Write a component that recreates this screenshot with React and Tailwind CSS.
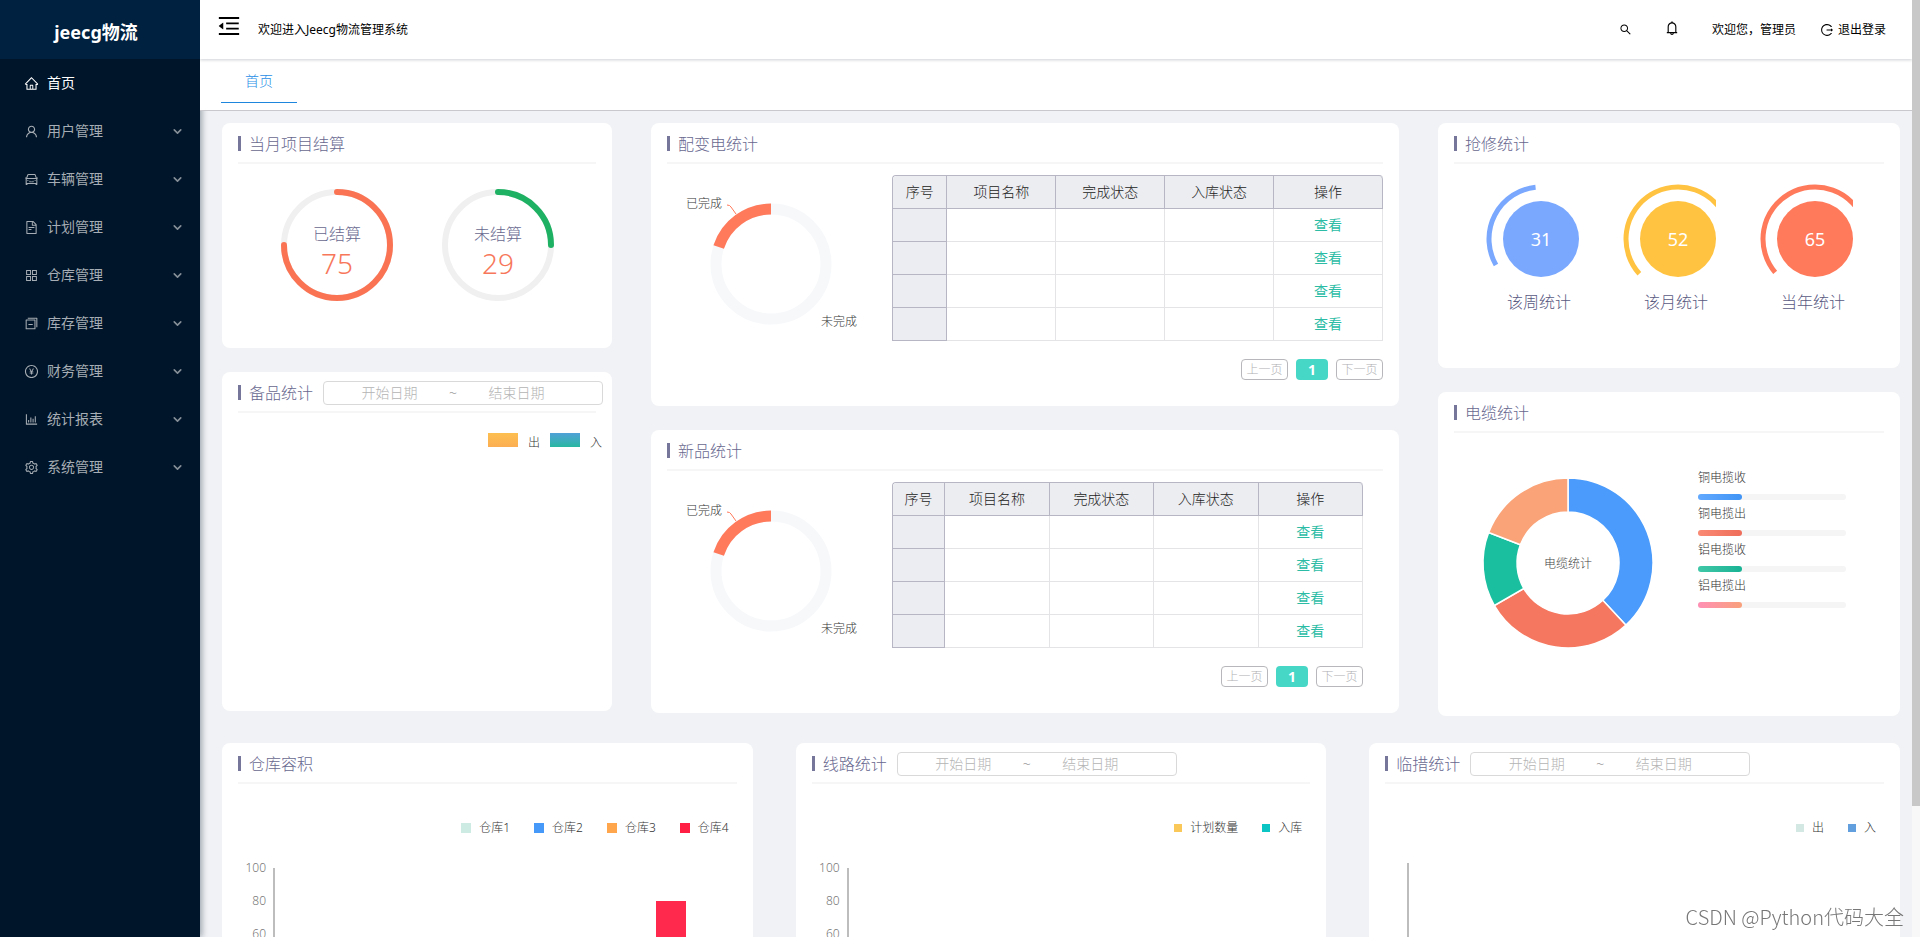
import React from "react";
import {
  AiOutlineHome,
  AiOutlineUser,
  AiOutlineCar,
  AiOutlineFileText,
  AiOutlineAppstore,
  AiOutlineSwitcher,
  AiOutlinePayCircle,
  AiOutlineBarChart,
  AiOutlineSetting,
  AiOutlineMenuFold,
  AiOutlineSearch,
  AiOutlineBell,
  AiOutlineLogout,
} from "react-icons/ai";
import { ChevronDown } from "lucide-react";

const MENU = [
  { label: "首页", icon: AiOutlineHome, active: true },
  { label: "用户管理", icon: AiOutlineUser },
  { label: "车辆管理", icon: AiOutlineCar },
  { label: "计划管理", icon: AiOutlineFileText },
  { label: "仓库管理", icon: AiOutlineAppstore },
  { label: "库存管理", icon: AiOutlineSwitcher },
  { label: "财务管理", icon: AiOutlinePayCircle },
  { label: "统计报表", icon: AiOutlineBarChart },
  { label: "系统管理", icon: AiOutlineSetting },
];

const COLUMNS = ["序号", "项目名称", "完成状态", "入库状态", "操作"];

const CABLE_SLICES = [
  { from: 0, to: 137, color: "#4a9bfb" },
  { from: 137, to: 240, color: "#f5775f" },
  { from: 240, to: 291, color: "#1abfa0" },
  { from: 291, to: 360, color: "#faa378" },
];

const CABLE_BARS = [
  { label: "铜电揽收", value: 30, fill: "bg-linear-to-r from-[#62a9ff] to-[#3f94f5]" },
  { label: "铜电揽出", value: 30, fill: "bg-linear-to-r from-[#fa8a74] to-[#ee6d5a]" },
  { label: "铝电揽收", value: 30, fill: "bg-linear-to-r from-[#3fc8a8] to-[#16b294]" },
  { label: "铝电揽出", value: 30, fill: "bg-linear-to-r from-[#ff8fb4] to-[#f9a07a]" },
];

const REPAIRS = [
  { label: "该周统计", value: 31, color: "#7aa8ff", from: 240, to: 354 },
  { label: "该月统计", value: 52, color: "#ffc341", from: 228, to: 430 },
  { label: "当年统计", value: 65, color: "#ff795b", from: 230, to: 430 },
];

// angles are in degrees, clockwise from twelve o'clock
const point = (cx, cy, r, deg) => {
  const rad = ((deg - 90) * Math.PI) / 180;
  return `${cx + r * Math.cos(rad)} ${cy + r * Math.sin(rad)}`;
};

const arc = (cx, cy, r, from, to) =>
  `M ${point(cx, cy, r, from)} A ${r} ${r} 0 ${to - from > 180 ? 1 : 0} 1 ${point(cx, cy, r, to)}`;

const slice = (cx, cy, inner, outer, from, to) =>
  `${arc(cx, cy, outer, from, to)} L ${point(cx, cy, inner, to)} A ${inner} ${inner} 0 ${
    to - from > 180 ? 1 : 0
  } 0 ${point(cx, cy, inner, from)} Z`;

const Sidebar = () => (
  <aside className="relative z-10 flex w-[200px] shrink-0 flex-col bg-[#001529] shadow-[2px_0_6px_rgba(0,21,41,0.35)]">
    <div className="flex h-[59px] items-center justify-center bg-[#002140] pt-1 pr-2">
      <h1 className="text-lg font-bold text-white">jeecg物流</h1>
    </div>
    <nav>
      {MENU.map(({ label, icon: Icon, active }) => (
        <a
          key={label}
          href="#"
          className={`flex h-12 items-center gap-2 pr-4 pl-6 text-sm ${
            active ? "text-white" : "text-[#a6adb4]"
          }`}
        >
          <Icon size={15} />
          <span className="flex-1">{label}</span>
          {!active && <ChevronDown size={13} strokeWidth={3} className="opacity-80" />}
        </a>
      ))}
    </nav>
  </aside>
);

const Header = () => (
  <header className="relative z-20 flex h-[59px] items-center bg-white pr-[26px] pl-4 text-xs text-black shadow-[0_1px_3px_rgba(0,21,41,0.2)]">
    <button type="button" aria-label="menu" className="mb-2">
      <AiOutlineMenuFold size={26} />
    </button>
    <span className="ml-4 flex-1">欢迎进入Jeecg物流管理系统</span>
    <button type="button" aria-label="search" className="mr-8">
      <AiOutlineSearch size={13} />
    </button>
    <button type="button" aria-label="notice" className="mr-8 mb-1">
      <AiOutlineBell size={16} />
    </button>
    <span className="mr-6">欢迎您，管理员</span>
    <a href="#" className="flex items-center gap-1">
      <AiOutlineLogout size={14} />
      退出登录
    </a>
  </header>
);

const Tabs = () => (
  <div className="relative z-10 h-[52px] border-b border-[#c9c9cd] bg-white px-[21px]">
    <button
      type="button"
      className="h-11 border-b border-[#1f86dd] px-6 text-sm font-light text-[#2a8fe6]"
    >
      首页
    </button>
  </div>
);

const Card = ({ title, extra, className = "", children }) => (
  <section className={`rounded-lg bg-white px-4 ${className}`}>
    <div className="flex h-[41px] items-center border-b-2 border-[#f6f6f6] pt-0.5">
      <span className="mr-2 h-[15px] w-[3px] shrink-0 bg-[#76769a]" />
      <h2 className="shrink-0 text-base font-light text-[#68688f]">{title}</h2>
      {extra}
    </div>
    {children}
  </section>
);

const DateRange = () => (
  <div className="ml-2.5 flex h-6 w-[280px] shrink-0 items-center rounded-sm border border-[#d9d9d9] bg-white pr-8 pl-3 text-sm text-[#8c8c8c]">
    <input
      aria-label="开始日期"
      placeholder="开始日期"
      className="w-0 flex-1 text-center outline-none placeholder:text-[#b4b4b4]"
    />
    <span className="w-5 text-center">~</span>
    <input
      aria-label="结束日期"
      placeholder="结束日期"
      className="w-0 flex-1 text-center outline-none placeholder:text-[#b4b4b4]"
    />
  </div>
);

const ProgressRing = ({ label, value, percent, color }) => (
  <svg width="112" height="112" viewBox="0 0 112 112">
    <circle cx="56" cy="56" r="53" fill="none" stroke="#f0f0f0" strokeWidth="6" />
    <path
      d={arc(56, 56, 53, 0, percent * 3.6)}
      fill="none"
      stroke={color}
      strokeWidth="6"
      strokeLinecap="round"
    />
    <text x="56" y="51" textAnchor="middle" fontSize="16" fill="#68688f">
      {label}
    </text>
    <text x="56" y="85" textAnchor="middle" fontSize="28" fill="#f7775b">
      {value}
    </text>
  </svg>
);

const FinishDonut = () => (
  <svg width="225" height="180" viewBox="0 0 225 180" className="shrink-0">
    <circle cx="104" cy="100" r="55" fill="none" stroke="#f6f8fa" strokeWidth="11" />
    <path d={arc(104, 100, 55, 288, 360)} fill="none" stroke="#ff795b" strokeWidth="11" />
    <path d="M60 41 Q63 41 64 43 L69 50" fill="none" stroke="#ff795b" />
    <text x="19" y="44" fontSize="12" fill="#333">
      已完成
    </text>
    <text x="154" y="162" fontSize="12" fill="#333">
      未完成
    </text>
  </svg>
);

const ProjectTable = () => (
  <div className="rounded-t border-t border-l border-[#b6b6c4]">
    <table className="w-full table-fixed border-separate border-spacing-0 text-sm">
      <colgroup>
        <col className="w-1/9" />
        <col className="w-2/9" />
        <col className="w-2/9" />
        <col className="w-2/9" />
        <col className="w-2/9" />
      </colgroup>
      <thead>
        <tr className="h-[33px] text-[#222]">
          {COLUMNS.map((name) => (
            <th
              key={name}
              className="border-r border-b border-[#b6b6c4] bg-[#ecedf1] p-0 font-light first:rounded-tl last:rounded-tr"
            >
              {name}
            </th>
          ))}
        </tr>
      </thead>
      <tbody>
        {[1, 2, 3, 4].map((row) => (
          <tr key={row} className="h-[33px]">
            <td className="border-r border-b border-[#b6b6c4] bg-[#ecedf2] p-0" />
            <td className="border-r border-b border-[#e4e4e6] p-0" />
            <td className="border-r border-b border-[#e4e4e6] p-0" />
            <td className="border-r border-b border-[#e4e4e6] p-0" />
            <td className="border-r border-b border-[#e4e4e6] p-0 text-center">
              <a href="#" className="font-normal text-[#2cbca5]">
                查看
              </a>
            </td>
          </tr>
        ))}
      </tbody>
    </table>
  </div>
);

const Pager = () => (
  <div className="mt-[18px] flex justify-end gap-2 text-xs text-[#b0b0b4]">
    <button type="button" className="h-[21px] w-[47px] rounded border border-[#b8b8bc]">
      上一页
    </button>
    <button type="button" className="h-[21px] w-8 rounded bg-[#46d7c6] text-sm leading-4 font-bold text-white">
      1
    </button>
    <button type="button" className="h-[21px] w-[47px] rounded border border-[#b8b8bc]">
      下一页
    </button>
  </div>
);

const FinishCard = ({ title, tableClass = "" }) => (
  <Card title={title} className="pb-[26px]">
    <div className="flex">
      <FinishDonut />
      <div className={`min-w-0 flex-1 pt-[11px] ${tableClass}`}>
        <ProjectTable />
        <Pager />
      </div>
    </div>
  </Card>
);

const RepairDial = ({ label, value, color, from, to }) => (
  <div className="w-[93px]">
    <svg width="93" height="96" viewBox="0 0 93 96">
      <circle cx="55" cy="55" r="38" fill={color} />
      <path d={arc(55, 55, 52, from, to)} fill="none" stroke={color} strokeWidth="5" />
      <text x="55" y="62" textAnchor="middle" fontSize="18" fontWeight="400" fill="#fff">
        {value}
      </text>
    </svg>
    <p className="mt-2.5 pl-3.5 text-center text-base text-[#58587f]">{label}</p>
  </div>
);

const CableChart = () => (
  <div className="flex gap-11 pt-9">
    <svg width="200" height="200" viewBox="0 0 200 200" className="shrink-0">
      {CABLE_SLICES.map(({ from, to, color }) => (
        <path
          key={color}
          d={slice(114, 94, 51, 85, from, to)}
          fill={color}
          stroke="#fff"
          strokeWidth="1.5"
        />
      ))}
      <text x="114" y="99" textAnchor="middle" fontSize="12" fill="#444">
        电缆统计
      </text>
    </svg>
    <ul className="w-[148px] pt-px">
      {CABLE_BARS.map(({ label, value, fill }) => (
        <li key={label} className="mb-1.5 text-xs text-[#333]">
          <span className="mb-2 block">{label}</span>
          <div className="h-1.5 rounded-full bg-[#f5f5f5]">
            <div className={`h-1.5 rounded-full ${fill}`} style={{ width: `${value}%` }} />
          </div>
        </li>
      ))}
    </ul>
  </div>
);

const Legend = ({ items }) => (
  <ul className="mt-9 flex justify-end gap-6 pr-2 text-xs text-[#333]">
    {items.map(([label, mark]) => (
      <li key={label} className="flex items-center gap-2">
        <span className={mark} />
        {label}
      </li>
    ))}
  </ul>
);

const Axis = ({ children }) => (
  <div className="mt-6 flex pb-8">
    <ul className="w-7 text-right text-xs text-[#777]">
      {[100, 80, 60, 40, 20, 0].map((tick) => (
        <li key={tick} className="h-[33px]">
          {tick}
        </li>
      ))}
    </ul>
    <div className="mt-2 ml-[7px] flex h-[165px] flex-1 items-end justify-end border-b-2 border-l-2 border-[#bdbdbd] pr-[51px]">
      {children}
    </div>
  </div>
);

const App = () => (
  <div className="flex h-screen overflow-hidden bg-[#f0f2f5] font-['Noto_Sans','Noto_Sans_CJK_SC',sans-serif]">
    <Sidebar />
    <div className="min-w-0 flex-1 overflow-y-auto [scrollbar-width:none]">
      <Header />
      <Tabs />
      <main className="flex flex-col gap-[27px] pt-3 pr-3 pb-6 pl-[22px] font-light">
        <div className="grid grid-cols-[390fr_748fr_462fr] items-start gap-[39px]">
          <div className="flex flex-col gap-6">
            <Card title="当月项目结算">
              <div className="flex justify-center gap-[49px] pt-[25px] pb-[47px]">
                <ProgressRing label="已结算" value="75" percent={75} color="#fa7454" />
                <ProgressRing label="未结算" value="29" percent={25} color="#1fb163" />
              </div>
            </Card>
            <Card title="备品统计" extra={<DateRange />} className="min-h-[339px]">
              <ul className="mt-5 -mr-1.5 flex justify-end gap-2.5 text-xs text-[#333]">
                <li className="flex gap-2.5">
                  <span className="h-3.5 w-[30px] bg-linear-to-b from-[#fdbf50] to-[#fcae52]" />
                  <span className="pt-0.5">出</span>
                </li>
                <li className="flex gap-2.5">
                  <span className="h-3.5 w-[30px] bg-linear-to-b from-[#4fa1d8] to-[#27b7a0]" />
                  <span className="pt-0.5">入</span>
                </li>
              </ul>
            </Card>
          </div>

          <div className="flex flex-col gap-6">
            <FinishCard title="配变电统计" />
            <FinishCard title="新品统计" tableClass="pr-5" />
          </div>

          <div className="flex flex-col gap-6">
            <Card title="抢修统计">
              <div className="flex justify-center gap-11 pt-5 pb-[54px]">
                {REPAIRS.map((item) => (
                  <RepairDial key={item.label} {...item} />
                ))}
              </div>
            </Card>
            <Card title="电缆统计" className="pb-[47px]">
              <CableChart />
            </Card>
          </div>
        </div>

        <div className="grid grid-cols-3 gap-[43px]">
          <Card title="仓库容积">
            <Legend
              items={[
                ["仓库1", "size-2.5 bg-[#cdebe2]"],
                ["仓库2", "size-2.5 bg-[#4699f8]"],
                ["仓库3", "size-2.5 bg-[#ffa64d]"],
                ["仓库4", "size-2.5 bg-[#ff1f45]"],
              ]}
            />
            <Axis>
              <span className="h-4/5 w-[30px] bg-[#ff284d]" />
            </Axis>
          </Card>
          <Card title="线路统计" extra={<DateRange />}>
            <Legend
              items={[
                ["计划数量", "size-2 bg-[#fac858]"],
                ["入库", "size-2 bg-[#0bc5c5]"],
              ]}
            />
            <Axis />
          </Card>
          <Card title="临措统计" extra={<DateRange />}>
            <Legend
              items={[
                ["出", "size-2 bg-[#d3e7e3]"],
                ["入", "size-2 bg-[#629fde]"],
              ]}
            />
            <div className="mt-[27px] ml-[22px] h-[171px] border-b-2 border-l-2 border-[#bdbdbd]" />
          </Card>
        </div>
      </main>
    </div>

    <div className="w-2 shrink-0 bg-[#f8f8f8]">
      <div className="h-[86%] bg-[#c8c8c8]" />
    </div>

    <p className="fixed right-4 bottom-1.5 z-30 font-['Noto_Sans_CJK_SC',sans-serif] text-xl font-light text-[#777]">
      CSDN @Python代码大全
    </p>
  </div>
);

export default App;
